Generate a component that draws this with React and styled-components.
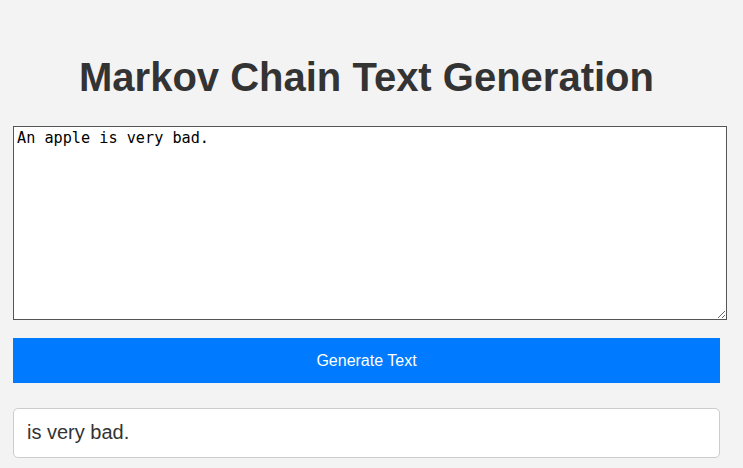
import styled, { createGlobalStyle } from 'styled-components';

const GlobalStyle = createGlobalStyle`
  body {
    margin: 0;
    background-color: #f3f3f3;
    font-family: "Liberation Sans", Arial, sans-serif;
    color: #333;
  }
`;

const Container = styled.div`
  width: 707px;
  padding: 33px 13px 10px;
`;

const Title = styled.h1`
  font-size: 40px;
  font-weight: bold;
  text-align: center;
  margin: 22px 0 26px;
  color: #333;
`;

const InputArea = styled.textarea`
  display: block;
  box-sizing: border-box;
  width: 714px;
  height: 194px;
  padding: 2px 3px;
  border: 1px solid #555;
  font-family: "DejaVu Sans Mono", "Liberation Mono", monospace;
  font-size: 15.2px;
  color: #000;
  background: #fff;
  margin: 0 0 18px;
`;

const GenerateButton = styled.button`
  display: block;
  width: 100%;
  height: 45px;
  border: none;
  background-color: #007bff;
  color: #fff;
  font-family: "Liberation Sans", Arial, sans-serif;
  font-size: 16px;
  cursor: pointer;
  margin-bottom: 25px;
`;

const Output = styled.div`
  box-sizing: border-box;
  height: 50px;
  padding: 12px 13px;
  background: #fff;
  border: 1px solid #ccc;
  border-radius: 5px;
  font-size: 20px;
  color: #333;
`;

export default function App() {
  return (
    <>
      <GlobalStyle />
      <Container>
        <Title>Markov Chain Text Generation</Title>
        <InputArea defaultValue="An apple is very bad." />
        <GenerateButton>Generate Text</GenerateButton>
        <Output>is very bad.</Output>
      </Container>
    </>
  );
}
